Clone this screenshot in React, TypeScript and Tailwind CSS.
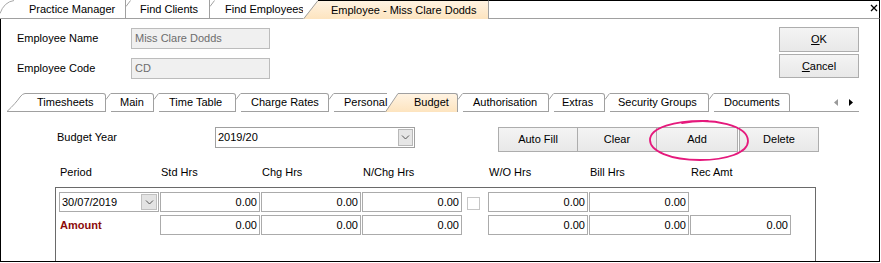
import React from "react";

const line = "border-[#a0a0a0]";

function Notch() {
  return (
    <svg width="5" height="19" className="shrink-0">
      <path d="M0 6.5 L4.5 0.5" stroke="#a0a0a0" fill="none" />
    </svg>
  );
}

function SubTab({ w, pl, label, last }: { w: number; pl: number; label: string; last?: boolean }) {
  return (
    <div className="flex shrink-0" style={{ width: w }}>
      <Notch />
      <div
        className={`flex-1 border-t border-b ${line} ${last ? "" : "border-r rounded-tr-[3px]"} leading-[17px] whitespace-nowrap`}
        style={{ paddingLeft: pl }}
      >
        {label}
      </div>
    </div>
  );
}

function Chevron() {
  return (
    <svg width="9" height="5" viewBox="0 0 9 5">
      <path d="M1 0.5 L4.5 4 L8 0.5" stroke="#555" fill="none" />
    </svg>
  );
}

function Num({ children }: { children?: React.ReactNode }) {
  return (
    <div className="h-[20px] border border-[#ababab] bg-white pr-[2px] text-right leading-[18px]">{children}</div>
  );
}

function Btn({ label, w, h, className = "" }: { label: React.ReactNode; w: number; h: number; className?: string }) {
  return (
    <div
      className={`flex shrink-0 items-center justify-center border border-[#adadad] bg-linear-to-b from-[#f4f4f4] to-[#e8e8e8] ${className}`}
      style={{ width: w, height: h }}
    >
      {label}
    </div>
  );
}

function Field({ label, value }: { label: string; value: string }) {
  return (
    <div className="flex items-center">
      <div className="w-[114px]">{label}</div>
      <div className="h-[21px] w-[139px] border border-[#bcbcbc] bg-[#f0f0f0] pl-[3px] leading-[19px] text-[#6d6d6d]">
        {value}
      </div>
    </div>
  );
}

export default function App() {
  const cols = "grid grid-cols-[100px_100px_100px_100px_24px_100px_100px_101px] gap-x-[1px]";

  return (
    <div className="relative h-[263px] w-[881px] overflow-hidden bg-white font-['Liberation_Sans',Arial,sans-serif] text-[11px] text-black">
      <div className="w-[880px]">
        {/* document tabs */}
        <div className="flex h-[19px]">
          <div className={`flex w-[126px] shrink-0 border-b border-r ${line}`}>
            <svg width="14" height="18" className="shrink-0">
              <path d="M0 13.5 Q4 2 14 0.5" stroke="#a8a8a8" fill="none" />
            </svg>
            <span className="pl-[15px] leading-[18px] whitespace-nowrap">Practice Manager</span>
          </div>
          <div className={`flex w-[84px] shrink-0 border-b border-r ${line}`}>
            <Notch />
            <span className="pl-[9px] leading-[18px] whitespace-nowrap">Find Clients</span>
          </div>
          <div className={`flex w-[93px] shrink-0 overflow-hidden border-b ${line}`}>
            <Notch />
            <span className="pl-[10px] leading-[18px] whitespace-nowrap">Find Employees</span>
          </div>
          <svg width="15" height="19" className="shrink-0">
            <defs>
              <linearGradient id="act" x1="0" y1="0" x2="0" y2="1">
                <stop offset="0" stopColor="#fff3e2" />
                <stop offset="1" stopColor="#fde4bf" />
              </linearGradient>
            </defs>
            <polygon points="0,19 15,0 15,19" fill="url(#act)" />
            <path d="M0.5 19 L15 0.5" stroke="#a0a0a0" fill="none" />
          </svg>
          <div className={`w-[171px] shrink-0 border-r border-t border-t-black ${line} bg-linear-to-b from-[#fff3e2] to-[#fde4bf] pl-[13px] leading-[18px] whitespace-nowrap`}>
            Employee - Miss Clare Dodds
          </div>
          <div className={`flex flex-1 justify-end border-b border-r border-t border-t-black border-r-black ${line}`}>
            <svg width="8" height="8" className="mr-[1px] mt-[3px]">
              <path d="M1 1 L7 7 M7 1 L1 7" stroke="#000" strokeWidth="1.3" fill="none" />
            </svg>
          </div>
        </div>

        <div className="flex h-[243px] flex-col border-x border-b border-black">
          {/* header */}
          <div className="mt-[8px] flex justify-between">
            <div className="ml-[16px] mt-[1px] flex flex-col gap-[9px]">
              <Field label="Employee Name" value="Miss Clare Dodds" />
              <Field label="Employee Code" value="CD" />
            </div>
            <div className="mr-[20px] flex flex-col gap-[2px]">
              <Btn w={80} h={25} label={<span><span className="underline">O</span>K</span>} />
              <Btn w={80} h={24} label={<span><span className="underline">C</span>ancel</span>} />
            </div>
          </div>

          {/* sub tabs */}
          <div className="ml-[6px] mt-[14px] flex h-[19px]">
            <svg width="18" height="19" className="shrink-0">
              <path d="M0 18.5 Q9 10 13 4 Q15.5 0.5 18 0.5" stroke="#a0a0a0" fill="none" />
              <path d="M0 18.5 H18" stroke="#a0a0a0" fill="none" />
            </svg>
            <div className={`w-[81px] shrink-0 rounded-tr-[3px] border-b border-r border-t ${line} pl-[12px] leading-[17px]`}>
              Timesheets
            </div>
            <SubTab w={48} pl={9} label="Main" />
            <SubTab w={82} pl={10} label="Time Table" />
            <SubTab w={93} pl={10} label="Charge Rates" />
            <SubTab w={56} pl={10} label="Personal" last />
            <svg width="13" height="19" className="shrink-0">
              <defs>
                <linearGradient id="act2" x1="0" y1="0" x2="0" y2="1">
                  <stop offset="0" stopColor="#fff3e2" />
                  <stop offset="1" stopColor="#fde4bf" />
                </linearGradient>
              </defs>
              <polygon points="0,19 13,0.5 13,19" fill="url(#act2)" />
              <path d="M0.5 19 L13 0.5" stroke="#a0a0a0" fill="none" />
            </svg>
            <div className={`w-[60px] shrink-0 rounded-tr-[3px] border-r border-t ${line} bg-linear-to-b from-[#fff3e2] to-[#fde4bf] pl-[16px] leading-[17px]`}>
              Budget
            </div>
            <SubTab w={91} pl={10} label="Authorisation" />
            <SubTab w={56} pl={8} label="Extras" />
            <SubTab w={104} pl={8} label="Security Groups" />
            <SubTab w={81} pl={10} label="Documents" />
            <div className={`flex w-[69px] shrink-0 items-center justify-end gap-[11px] border-b ${line} pr-[6px]`}>
              <svg width="4" height="7">
                <polygon points="4,0 0,3.5 4,7" fill="#9a9a9a" />
              </svg>
              <svg width="4" height="7">
                <polygon points="0,0 4,3.5 0,7" fill="#000" />
              </svg>
            </div>
          </div>

          {/* budget year row */}
          <div className="mt-[15px] flex items-start">
            <div className="ml-[56px] w-[158px] leading-[21px]">Budget Year</div>
            <div className="flex h-[21px] w-[200px] items-stretch border border-[#a0a0a0] bg-white">
              <div className="flex-1 pl-[2px] leading-[19px]">2019/20</div>
              <div className="m-px flex w-[15px] items-center justify-center border border-[#b8b8b8] bg-[#e6e6e6]">
                <Chevron />
              </div>
            </div>
            <div className="ml-[83px] flex">
              <Btn w={80} h={25} label="Auto Fill" />
              <Btn w={79} h={25} label="Clear" className="border-l-0" />
              <Btn w={81} h={25} label="Add" className="border-l-0" />
              <Btn w={80} h={25} label="Delete" className="ml-[1px]" />
            </div>
          </div>

          {/* column headers */}
          <div className={`ml-[59px] mt-[14px] leading-[13px] ${cols}`}>
            <div>Period</div>
            <div>Std Hrs</div>
            <div>Chg Hrs</div>
            <div>N/Chg Hrs</div>
            <div />
            <div>W/O Hrs</div>
            <div>Bill Hrs</div>
            <div>Rec Amt</div>
          </div>

          {/* group box */}
          <div className="ml-[54px] mt-[8px] w-[761px] flex-1 border-x border-t border-[#6a6a6a] pl-[3px] pt-[4px]">
            <div className={`${cols} gap-y-[3px]`}>
              <div className="flex h-[20px] border border-[#ababab] bg-white">
                <div className="flex-1 pl-[2px] leading-[18px]">30/07/2019</div>
                <div className="m-px flex w-[16px] items-center justify-center border border-[#c0c0c0] bg-[#e3e3e3]">
                  <Chevron />
                </div>
              </div>
              <Num>0.00</Num>
              <Num>0.00</Num>
              <Num>0.00</Num>
              <div className="pl-[4px] pt-[5px]">
                <div className="h-[13px] w-[13px] border border-[#c6c6c6] bg-white" />
              </div>
              <Num>0.00</Num>
              <Num>0.00</Num>
              <div />

              <div className="pl-[1px] font-bold leading-[20px] text-[#8b0a0a]">Amount</div>
              <Num>0.00</Num>
              <Num>0.00</Num>
              <Num>0.00</Num>
              <div />
              <Num>0.00</Num>
              <Num>0.00</Num>
              <Num>0.00</Num>
            </div>
          </div>
        </div>
      </div>

      {/* hand-drawn highlight */}
      <svg width="112" height="52" className="pointer-events-none absolute left-[644px] top-[114px]">
        <path
          d="M38 9 C70 3, 104 12, 104 27 C104 39, 82 46, 56 46 C26 46, 6 37, 6 26 C6 14, 30 6, 64 7"
          stroke="#e5197c"
          strokeWidth="1.8"
          fill="none"
          strokeLinecap="round"
        />
      </svg>
    </div>
  );
}
